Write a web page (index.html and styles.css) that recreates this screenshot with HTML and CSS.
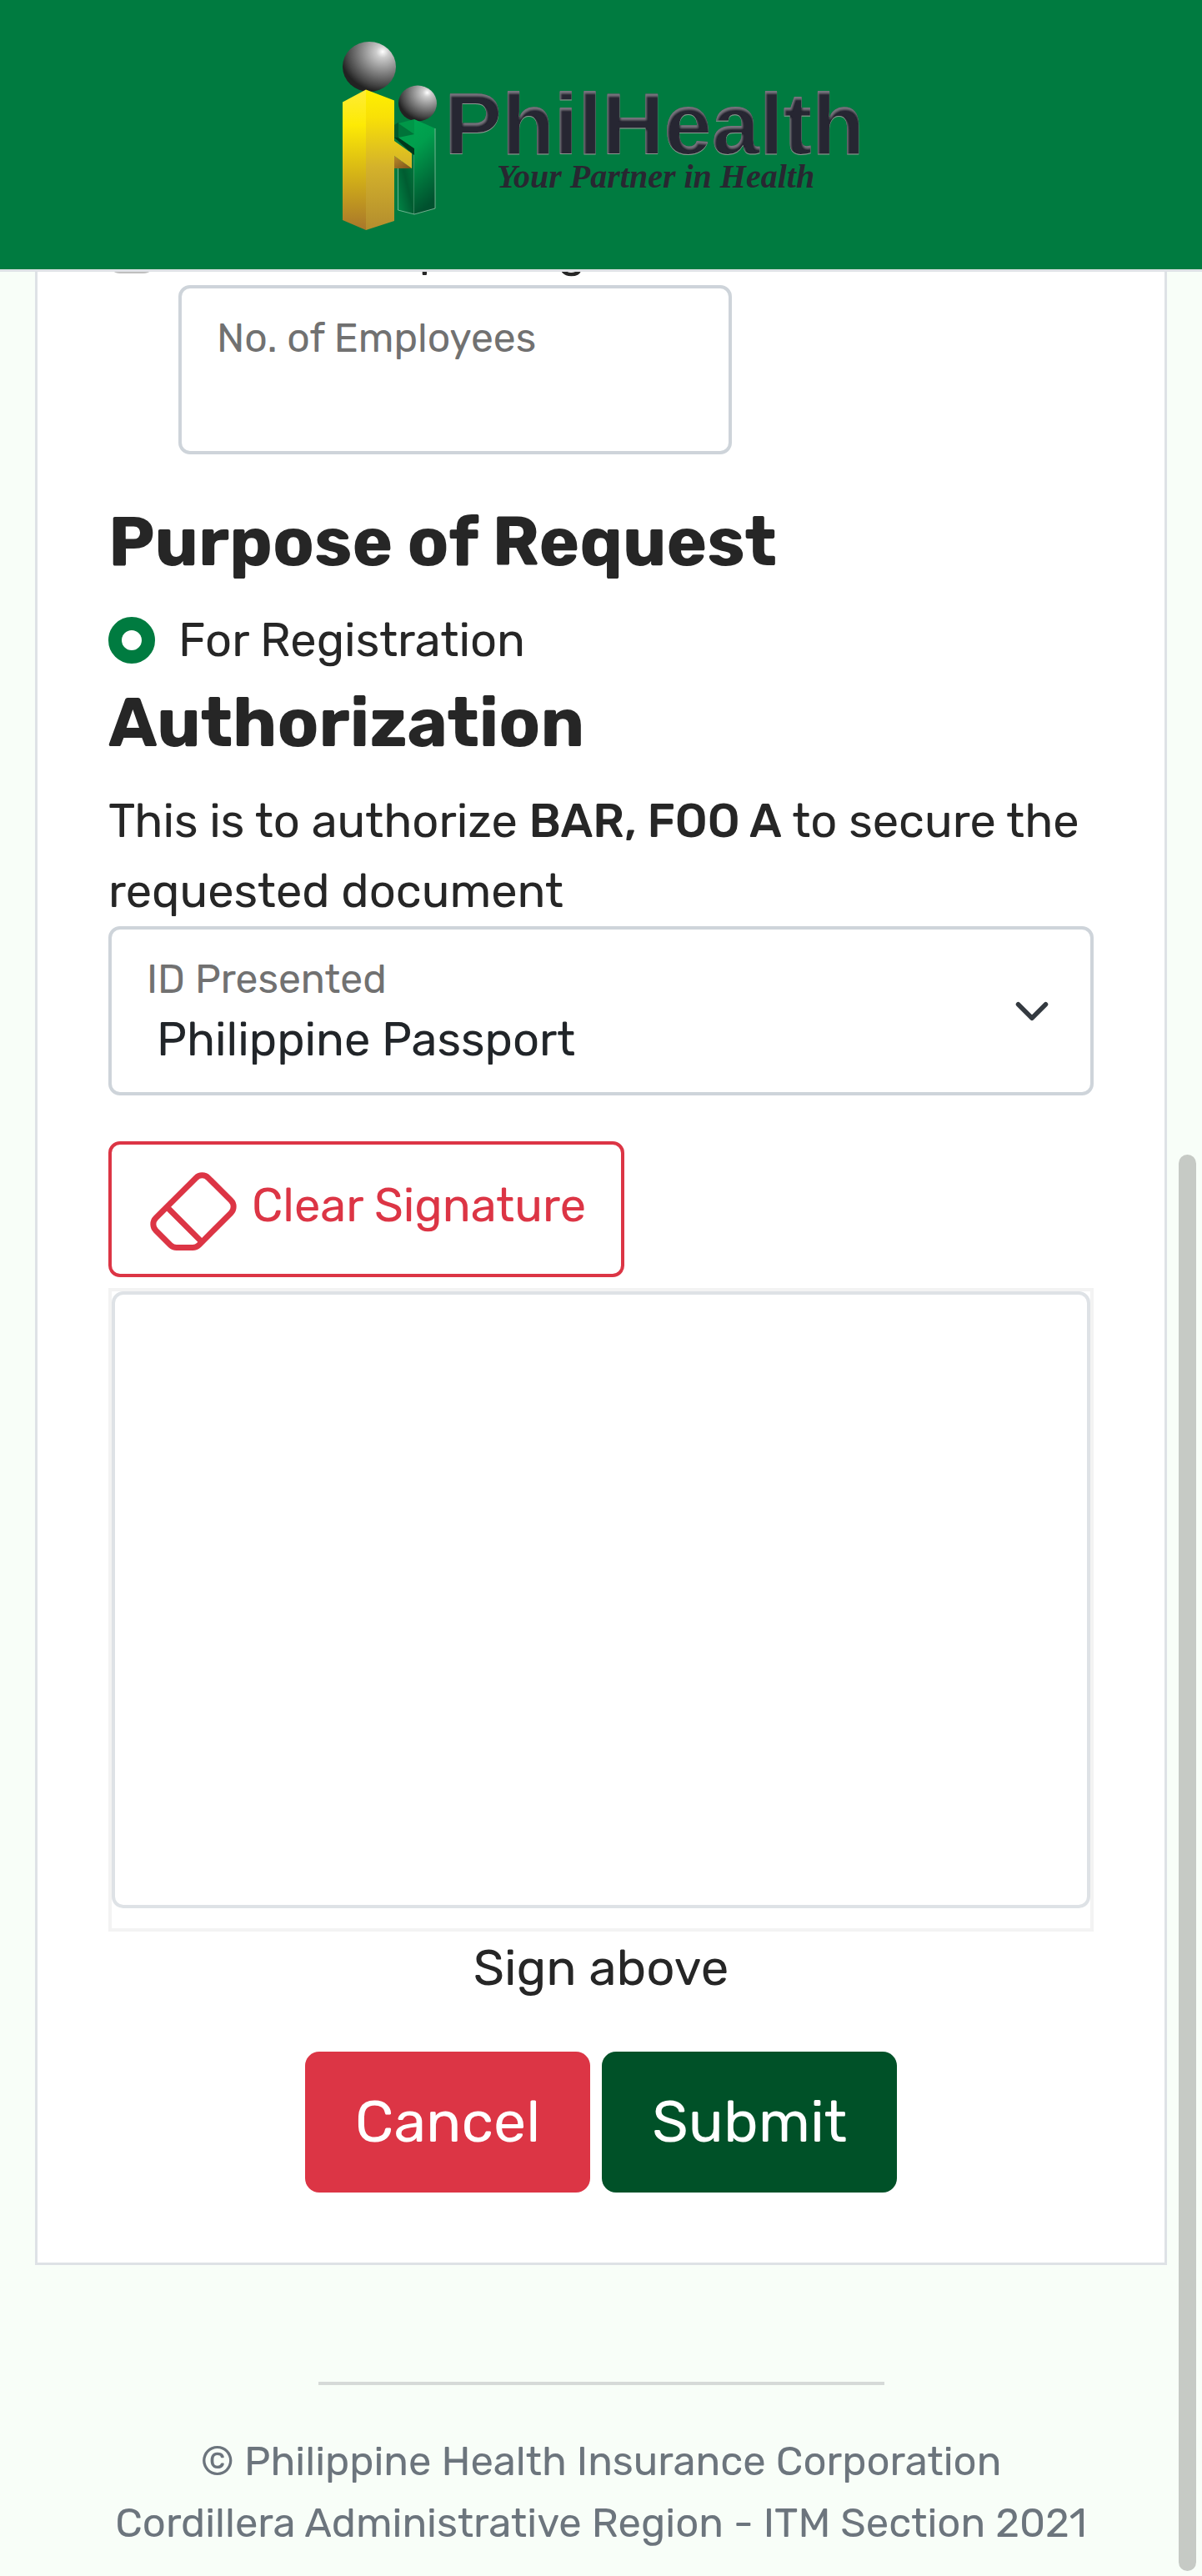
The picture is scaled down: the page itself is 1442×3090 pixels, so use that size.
FILE: index.html
```
<!DOCTYPE html>
<html lang="en">
<head>
<meta charset="utf-8">
<meta name="viewport" content="width=device-width, initial-scale=1">
<title>PhilHealth</title>
<link rel="stylesheet" href="styles.css">
</head>
<body>
<header class="site-header">
  <svg class="logo" viewBox="400 45 640 240" role="img" aria-label="PhilHealth, Your Partner in Health">
    <defs>
      <radialGradient id="ball" cx=".75" cy=".2" r=".8">
        <stop offset="0" stop-color="#fff"/><stop offset=".15" stop-color="#ccc"/><stop offset=".5" stop-color="#888"/><stop offset=".85" stop-color="#444"/><stop offset="1" stop-color="#222"/>
      </radialGradient>
      <linearGradient id="goldSide" x1="0" y1="0" x2="0" y2="1">
        <stop offset="0" stop-color="#ffec35"/><stop offset=".25" stop-color="#fdea05"/><stop offset="1" stop-color="#a8762b"/>
      </linearGradient>
      <linearGradient id="goldFront" x1="0" y1="0" x2="0" y2="1">
        <stop offset="0" stop-color="#fff000"/><stop offset=".2" stop-color="#f8e007"/><stop offset=".55" stop-color="#d4b22b"/><stop offset="1" stop-color="#b38d2e"/>
      </linearGradient>
      <linearGradient id="greenSide" x1="1" y1="0" x2="0" y2="1">
        <stop offset="0" stop-color="#007f3f"/><stop offset=".5" stop-color="#005c31"/><stop offset="1" stop-color="#008747"/>
      </linearGradient>
      <linearGradient id="greenFront" x1="0" y1="0" x2=".2" y2="1">
        <stop offset="0" stop-color="#00a651"/><stop offset=".3" stop-color="#009e4d"/><stop offset="1" stop-color="#00512e"/>
      </linearGradient>
      <linearGradient id="under" x1="0" y1="0" x2="1" y2="1">
        <stop offset="0" stop-color="#b98a2b"/><stop offset="1" stop-color="#79501b"/>
      </linearGradient>
      <filter id="bevel" x="-5%" y="-10%" width="110%" height="120%">
        <feOffset in="SourceAlpha" dx="1" dy="3" result="shifted"/>
        <feGaussianBlur in="shifted" stdDeviation="1" result="soft"/>
        <feFlood flood-color="#77757e"/>
        <feComposite in2="SourceAlpha" operator="in"/>
        <feComposite in2="soft" operator="out" result="light"/>
        <feOffset in="SourceAlpha" dx="0" dy="1" result="down"/>
        <feFlood flood-color="#8f9a94"/>
        <feComposite in2="down" operator="in" result="rim"/>
        <feMerge><feMergeNode in="rim"/><feMergeNode in="SourceGraphic"/><feMergeNode in="light"/></feMerge>
      </filter>
    </defs>
    <ellipse cx="442" cy="80" rx="32" ry="30" fill="url(#ball)"/>
    <ellipse cx="500" cy="124" rx="23" ry="21.5" fill="url(#ball)"/>
    <path d="M476.500 198V252L496 257V176Z" fill="url(#greenSide)" stroke="#b9dcc6" stroke-width=".6"/>
    <path d="M472 149L477 147L496 161V179L472 165Z" fill="#007339"/>
    <path d="M472 150L477 147V166H472Z" fill="#005a2e"/>
    <path d="M472 165L477 165L496 178V186L493 184Z" fill="#00391c"/>
    <path d="M477 148L496 143V161Z" fill="#009748"/>
    <path d="M477 165L496 161V178Z" fill="#00a04d"/>
    <path d="M496 143L521 154V250L496 257Z" fill="url(#greenFront)"/>
    <path d="M521 154V250L496 257" fill="none" stroke="#a7cdb6" stroke-width=".7"/>
    <path d="M410 122.500L438 107.500V276L410 264Z" fill="url(#goldSide)"/>
    <path d="M472 187L493 202H472Z" fill="url(#under)"/>
    <path d="M438 107.500L472 120.500V169L493 184V202L472 187V265L438 276Z" fill="url(#goldFront)"/>
    <text class="logo-name" x="532" y="184" filter="url(#bevel)">PhilHealth</text>
    <text class="logo-tagline" x="595" y="225">Your Partner in Health</text>
  </svg>
</header>

<main class="card">
  <form>
    <div class="employees">
      <label class="check"><input type="checkbox">Business Updating</label>
      <div class="field employees-field">
        <label for="employees">No. of Employees</label>
        <input id="employees" type="text">
      </div>
    </div>

    <h2>Purpose of Request</h2>
    <label class="check"><input type="radio" name="purpose" checked>For Registration</label>

    <h2>Authorization</h2>
    <p class="statement">This is to authorize <strong>BAR, FOO A</strong> to secure the requested document</p>
    <div class="field id-field">
      <label for="presented">ID Presented</label>
      <select id="presented"><option>Philippine Passport</option></select>
      <svg class="chevron" viewBox="0 0 16 16" aria-hidden="true"><path d="M2 5l6 6 6-6"/></svg>
    </div>

    <button class="clear" type="button">
      <svg viewBox="0 0 16 16" aria-hidden="true"><path d="M8.086 2.207a2 2 0 0 1 2.828 0l3.879 3.879a2 2 0 0 1 0 2.828l-5.500 5.500A2 2 0 0 1 7.879 15H5.120a2 2 0 0 1-1.414-.586l-2.500-2.500a2 2 0 0 1 0-2.828l6.879-6.879zm2.121.707a1 1 0 0 0-1.414 0L4.160 7.547l5.293 5.293 4.633-4.633a1 1 0 0 0 0-1.414l-3.879-3.879zM8.746 13.547 3.453 8.254 1.914 9.793a1 1 0 0 0 0 1.414l2.500 2.500a1 1 0 0 0 .707.293H7.880a1 1 0 0 0 .707-.293l.160-.160z"/></svg>
      Clear Signature
    </button>
    <div class="signature"><canvas aria-label="Signature"></canvas></div>
    <p class="hint">Sign above</p>

    <div class="actions">
      <button class="cancel" type="button">Cancel</button>
      <button class="submit" type="submit">Submit</button>
    </div>
  </form>
</main>

<footer class="site-footer">
  <hr>
  <p>© Philippine Health Insurance Corporation<br>Cordillera Administrative Region - ITM Section 2021</p>
</footer>
<div class="scroll-thumb"></div>
</body>
</html>
```
FILE: styles.css
```
* { box-sizing: border-box; }

body {
  margin: 0;
  background: #f8fef8;
  color: #262626;
  font: 400 56px/84px Rubik, Inter, "Liberation Sans", sans-serif;
}

.site-header {
  position: sticky;
  top: 0;
  z-index: 2;
  display: flex;
  justify-content: center;
  padding: 45px 0 38px;
  background: #007b40;
  border-bottom: 3px solid #dee2e6;
}
.logo { width: 640px; height: 240px; }
.logo-name { font: 700 103px "Liberation Sans", sans-serif; fill: #282731; }
.logo-tagline { font: italic 700 40px "Liberation Serif", serif; fill: #282731; }

.card {
  margin: 0 42px;
  padding: 0 85px 84px;
  background: #fff;
  border: 3px solid #dee2e6;
  border-top: 0;
}

h2 { margin: 11px 0 30px; font-size: 82px; line-height: 92px; font-weight: 700; }
p { margin: 0; }
strong { font-weight: 500; }
button, input, select { font: inherit; color: inherit; }

/* The form is scrolled: its first row is partly behind the header. */
.employees { display: flow-root; margin: 0 0 59px; }
.employees .check { margin-top: -68px; }

.check { display: flex; align-items: center; gap: 28px; }
.check input { appearance: none; flex: none; width: 56px; height: 56px; margin: 0; }
.check input[type="checkbox"] { border: 4px solid #bfbfbf; border-radius: 14px; }
.check input[type="radio"] { border: 16px solid #007b40; border-radius: 50%; background: #fff; }

.field {
  display: flex;
  flex-direction: column;
  padding: 30px 42px 21px;
  border: 4px solid #ced4da;
  border-radius: 14px;
}
.field label { font-size: 48px; line-height: 60px; color: #717171; }
.field input, .field select {
  width: 100%;
  height: 84px;
  padding: 0;
  border: 0;
  background: none;
  outline: 0;
}
.employees-field { width: 664px; max-width: calc(100% - 84px); margin-left: 84px; }
.id-field { position: relative; margin-bottom: 55px; }
.id-field select { appearance: none; padding-left: 12px; color: #212529; }
.chevron {
  position: absolute;
  right: 48px;
  top: 50%;
  width: 44px;
  height: 44px;
  margin-top: -22px;
  pointer-events: none;
  fill: none;
  stroke: #343a40;
  stroke-width: 2;
  stroke-linecap: round;
  stroke-linejoin: round;
}

.clear {
  display: flex;
  gap: 14px;
  margin: 0 0 13px;
  padding: 22px 42px 21px;
  background: none;
  border: 4px solid #dc3545;
  border-radius: 14px;
  color: #dc3545;
  line-height: 102px;
}
.clear svg { width: 112px; height: 112px; fill: currentColor; }

.signature { padding-bottom: 24px; border: 4px solid #f3f3f3; }
.signature canvas {
  display: block;
  width: 100%;
  height: 740px;
  border: 4px solid #dee2e6;
  border-radius: 14px;
}
.hint { font-size: 60px; line-height: 88px; text-align: center; }

.actions { display: flex; justify-content: center; gap: 14px; margin-top: 56px; }
.actions button {
  padding: 32px 60px;
  border: 0;
  border-radius: 17px;
  color: #fff;
  font-size: 70px;
  line-height: 105px;
}
.cancel { background: #dc3545; }
.submit { background: #005128; }

.site-footer { padding: 140px 42px 27px; color: #6c757d; text-align: center; font-size: 49px; line-height: 74px; }
.site-footer hr { width: 50%; height: 4px; margin: 0 auto 54px; border: 0; background: #d6dad8; }

.scroll-thumb {
  position: fixed;
  right: 7px;
  bottom: 6px;
  width: 21px;
  height: 55%;
  border-radius: 11px;
  background: #c6cac5;
}
```
